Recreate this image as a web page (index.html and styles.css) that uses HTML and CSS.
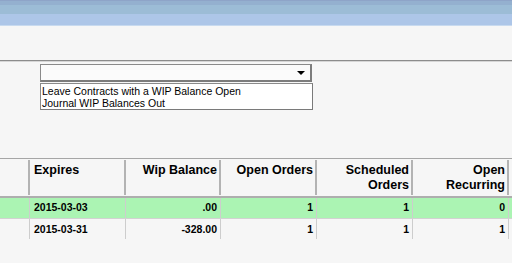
FILE: index.html
```html
<!DOCTYPE html>
<html>
<head>
<meta charset="utf-8">
<link rel="stylesheet" href="styles.css">
</head>
<body>
<div class="titlebar"></div>
<div class="toolbar"></div>
<div class="divider"></div>
<div class="form">
  <div class="combo">
    <span class="combo-value"></span>
    <span class="combo-arrow"></span>
  </div>
  <ul class="listbox">
    <li>Leave Contracts with a WIP Balance Open</li>
    <li>Journal WIP Balances Out</li>
  </ul>
</div>
<div class="grid">
  <div class="row head">
    <div class="cell"></div>
    <div class="cell left">Expires</div>
    <div class="cell">Wip Balance</div>
    <div class="cell">Open Orders</div>
    <div class="cell">Scheduled<br>Orders</div>
    <div class="cell">Open<br>Recurring</div>
    <div class="cell last"></div>
  </div>
  <div class="row data selected">
    <div class="cell"></div>
    <div class="cell left">2015-03-03</div>
    <div class="cell">.00</div>
    <div class="cell">1</div>
    <div class="cell">1</div>
    <div class="cell">0</div>
    <div class="cell last"></div>
  </div>
  <div class="row data">
    <div class="cell"></div>
    <div class="cell left">2015-03-31</div>
    <div class="cell">-328.00</div>
    <div class="cell">1</div>
    <div class="cell">1</div>
    <div class="cell">1</div>
    <div class="cell last"></div>
  </div>
</div>
</body>
</html>
```
FILE: styles.css
```css
html, body {
  margin: 0;
  padding: 0;
}
body {
  width: 512px;
  height: 263px;
  overflow: hidden;
  background: #f6f6f6;
  font-family: "Liberation Sans", Arial, sans-serif;
  color: #000;
}
.titlebar {
  height: 26px;
  background: linear-gradient(to bottom,
    #8ea4c8 0, #8ea4c8 1px,
    #94b0cf 1px, #94b0cf 5px,
    #9cbcd6 5px, #9cbcd6 14px,
    #adc6e8 14px, #adc6e8 25px,
    #c8daef 25px, #c8daef 26px);
}
.toolbar {
  height: 34px;
}
.divider {
  height: 0;
  border-top: 1px solid #8c8c8c;
  border-bottom: 1px solid #d6d6d6;
}
.form {
  padding: 2px 0 0 40px;
  height: 94px;
}
.combo {
  box-sizing: border-box;
  width: 272px;
  height: 18px;
  background: #fbfbfb;
  border-top: 1px solid #8a8a8a;
  border-left: 1px solid #8a8a8a;
  border-bottom: 2px solid #7c7c7c;
  border-right: 2px solid #7c7c7c;
  display: flex;
  justify-content: flex-end;
  align-items: center;
  padding-right: 5px;
}
.combo-arrow {
  width: 0;
  height: 0;
  border-left: 4px solid transparent;
  border-right: 4px solid transparent;
  border-top: 4px solid #000;
  margin-top: 1px;
}
.listbox {
  list-style: none;
  margin: 1px 0 0 0;
  padding: 1px 0 0 1px;
  box-sizing: border-box;
  width: 273px;
  height: 27px;
  background: #fff;
  border: 1px solid #8a8a8a;
  border-bottom-color: #7a7a7a;
  border-right-color: #7a7a7a;
  font-size: 10.5px;
  line-height: 12px;
}
.listbox li {
  height: 12px;
  white-space: nowrap;
}
.grid {
  border-top: 1px solid #a6a6a6;
}
.row {
  display: grid;
  grid-template-columns: 30px 96px 95px 96px 96px 96px 1fr;
}
.cell {
  box-sizing: border-box;
  text-align: right;
  white-space: nowrap;
  overflow: hidden;
}
.cell.left {
  text-align: left;
}
.head {
  height: 39px;
  border-bottom: 2px solid #aeaeae;
  box-sizing: border-box;
}
.head .cell {
  font-weight: bold;
  font-size: 12.5px;
  line-height: 15px;
  padding: 3px 2px 0 4px;
  border-right: 2px solid #b3b3b3;
  margin-bottom: 1px;
  margin-top: 1px;
}
.data {
  height: 20px;
}
.data .cell {
  font-weight: bold;
  font-size: 10.5px;
  line-height: 20px;
  padding: 0 3px 0 4px;
  border-right: 1px solid #cdcdcd;
}
.head .cell.last, .data .cell.last {
  border-right: none;
}
.selected {
  background: #abf4b3;
  border-bottom: 1px solid #d2d2d2;
}
.selected .cell {
  line-height: 19px;
}
```
